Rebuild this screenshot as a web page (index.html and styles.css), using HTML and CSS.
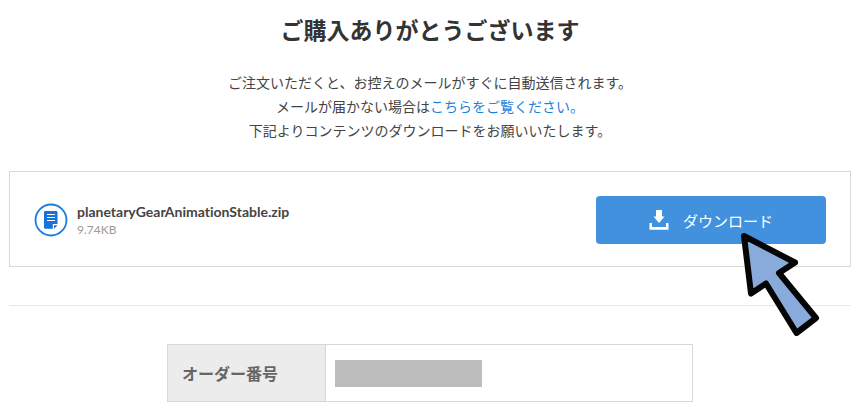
FILE: index.html
```html
<!DOCTYPE html>
<html lang="ja">
<head>
<meta charset="utf-8">
<meta name="viewport" content="width=device-width, initial-scale=1">
<title>ご購入ありがとうございます</title>
<link rel="stylesheet" href="styles.css">
</head>
<body>
<main class="page">
  <h1 class="title">ご購入ありがとうございます</h1>
  <p class="lead">ご注文いただくと、お控えのメールがすぐに自動送信されます。<br>メールが届かない場合は<a class="link" href="#help">こちらをご覧ください。</a><br>下記よりコンテンツのダウンロードをお願いいたします。</p>

  <section class="file-card">
    <svg class="file-icon" viewBox="0 0 34 34" aria-hidden="true">
      <circle cx="17" cy="17" r="15.5" fill="none" stroke="#1b7ce0" stroke-width="1.8"/>
      <path d="M11.3 8h10.9a1.3 1.3 0 0 1 1.3 1.3v11.7h-4.7v4.7h-7.5a1.3 1.3 0 0 1-1.3-1.3V9.3a1.3 1.3 0 0 1 1.3-1.3z" fill="#1673d9"/>
      <path d="M20 22.2h3.5L20 25.7z" fill="#1673d9"/>
      <path d="M13 11.5h8M13 14.5h8M13 17.5h8" stroke="#fff" stroke-width="1"/>
    </svg>
    <div class="file-info">
      <span class="file-name">planetaryGearAnimationStable.zip</span>
      <span class="file-size">9.74KB</span>
    </div>
    <button class="download" type="button">
      <svg class="download-icon" viewBox="0 0 20 20" aria-hidden="true">
        <path d="M7 0h6v6.5h2.5L10 13 4.5 6.5H7z" fill="#fff"/>
        <path d="M.5 13H3v4h14v-4h2.5v6.7H.5z" fill="#fff"/>
      </svg>
      ダウンロード
    </button>
    <svg class="pointer" viewBox="0 0 84 106" aria-hidden="true">
      <path d="M6 6l51 26.5L41 43l37 45-19.5 15L28 53.5l-15 10z" fill="#88abdc" stroke="#050505" stroke-width="6" stroke-linejoin="round"/>
    </svg>
  </section>

  <hr class="divider">

  <table class="order">
    <tr>
      <th scope="row">オーダー番号</th>
      <td><span class="redacted"></span></td>
    </tr>
  </table>
</main>
</body>
</html>
```
FILE: styles.css
```css
* {
  box-sizing: border-box;
}

body {
  margin: 0;
  background: #fff;
  color: #333;
  font-family: Lato, "Noto Sans CJK JP", sans-serif;
}

.page {
  padding: 12px 9px;
}

.title {
  margin: 0;
  font-size: 23px;
  line-height: 36px;
  text-align: center;
}

.lead {
  margin: 23px 0 28px;
  color: #444;
  font-size: 14px;
  line-height: 24px;
  text-align: center;
}

.link {
  color: #1b7fe0;
  text-decoration: none;
}

.file-card {
  position: relative;
  display: flex;
  align-items: center;
  padding: 24px 24px 22px;
  border: 1px solid #d8d8d8;
}

.file-icon {
  flex: none;
  width: 34px;
  height: 34px;
}

.file-info {
  flex: 1;
  display: flex;
  flex-direction: column;
  margin-left: 9px;
}

.file-name {
  color: #444;
  font-size: 14px;
  font-variant-ligatures: none;
  font-weight: 700;
  line-height: 20px;
}

.file-size {
  color: #999;
  font-size: 12px;
  line-height: 16px;
}

.download {
  display: flex;
  align-items: center;
  justify-content: center;
  gap: 14px;
  width: 230px;
  height: 48px;
  padding: 0;
  border: 0;
  border-radius: 4px;
  background: #4191df;
  color: #fff;
  font: 15px Lato, "Noto Sans CJK JP", sans-serif;
}

.download-icon {
  width: 20px;
  height: 20px;
}

.pointer {
  position: absolute;
  top: 58px;
  right: 28px;
  width: 84px;
  height: 106px;
}

.divider {
  margin: 38px 0;
  border: 0;
  border-top: 1px solid #e8e8e8;
}

.order {
  width: 526px;
  max-width: 100%;
  margin: 0 auto;
  border-collapse: collapse;
}

.order th,
.order td {
  height: 57px;
  border: 1px solid #d8d8d8;
}

.order th {
  width: 30%;
  padding: 0 14px;
  background: #ececec;
  color: #666;
  font-size: 16px;
  text-align: left;
}

.order td {
  padding: 0 9px;
}

.redacted {
  display: block;
  width: 147px;
  height: 27px;
  background: #bdbdbd;
}
```
